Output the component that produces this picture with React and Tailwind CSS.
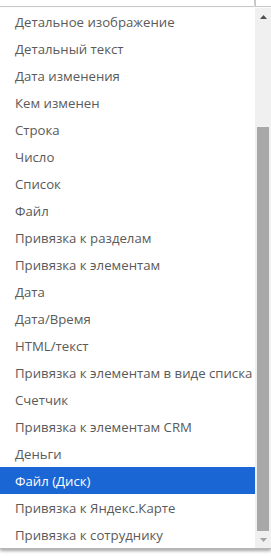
const items = [
  'Детальное изображение',
  'Детальный текст',
  'Дата изменения',
  'Кем изменен',
  'Строка',
  'Число',
  'Список',
  'Файл',
  'Привязка к разделам',
  'Привязка к элементам',
  'Дата',
  'Дата/Время',
  'HTML/текст',
  'Привязка к элементам в виде списка',
  'Счетчик',
  'Привязка к элементам CRM',
  'Деньги',
  'Файл (Диск)',
  'Привязка к Яндекс.Карте',
  'Привязка к сотруднику',
]

export default function App() {
  return (
    <div className="w-[271px] h-[556px] bg-white overflow-hidden" style={{ fontFamily: '"Open Sans", "Noto Sans", sans-serif' }}>
      {/* select box above */}
      <div className="flex h-[8px]">
        <div className="w-[255px] h-[7px] border-b border-r border-[#c8c8c8] rounded-br-[2px]" />
        <div className="flex-1 h-[7px] border-b border-l border-[#c8c8c8]" />
      </div>

      <div className="flex shadow-[0_2px_3px_rgba(0,0,0,0.35)] border-b border-[#b8b8b8]">
        <ul className="w-[255px]">
          {items.map((t) => (
            <li
              key={t}
              className={`h-[27px] pl-[15px] pt-[2px] flex items-center text-[13.2px] whitespace-nowrap ${
                t === 'Файл (Диск)' ? 'bg-[#1a66d4] text-white' : 'text-[#5a5a5a]'
              }`}
            >
              {t}
            </li>
          ))}
        </ul>
        <div className="w-[16px] bg-[#f0f0f0] flex flex-col">
          <div className="h-[17px] flex items-center justify-center">
            <svg width="7" height="4" viewBox="0 0 7 4"><path d="M3.5 0L7 4H0z" fill="#505050" /></svg>
          </div>
          <div className="h-[102px]" />
          <div className="flex-1 mx-[2px] bg-[#a8a8a8]" />
          <div className="h-[17px] flex items-center justify-center">
            <svg width="7" height="4" viewBox="0 0 7 4"><path d="M0 0H7L3.5 4z" fill="#a3a3a3" /></svg>
          </div>
        </div>
      </div>
    </div>
  )
}
